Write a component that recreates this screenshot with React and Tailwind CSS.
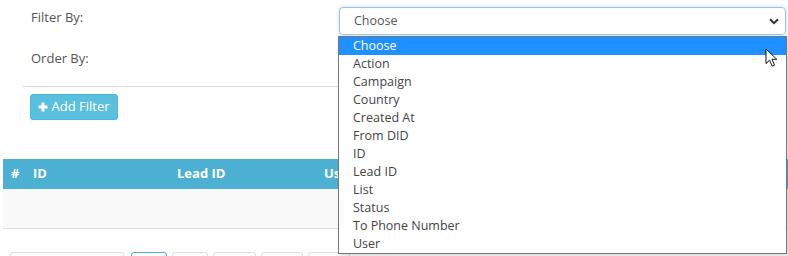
import React from 'react';

const options = [
  'Choose',
  'Action',
  'Campaign',
  'Country',
  'Created At',
  'From DID',
  'ID',
  'Lead ID',
  'List',
  'Status',
  'To Phone Number',
  'User',
];

const columns = [
  { label: '#', width: 'w-[22px]' },
  { label: 'ID', width: 'w-[144px]' },
  { label: 'Lead ID', width: 'w-[147px]' },
  { label: 'User', width: 'w-[150px]' },
  { label: 'Campaign', width: 'w-[150px]' },
  { label: 'Status', width: 'flex-1' },
];

const Chevron = () => (
  <svg width="10" height="7" viewBox="0 0 10 7" className="text-[#333]">
    <path d="M1 1.2 L5 5.2 L9 1.2" fill="none" stroke="currentColor" strokeWidth="2" />
  </svg>
);

const Cursor = () => (
  <svg width="14" height="20" viewBox="0 0 14 20" className="absolute left-[765px] top-[48px]">
    <path
      d="M1 1 L1 15.5 L4.6 12.2 L7.2 18.2 L9.6 17.2 L7 11.3 L11.8 11.3 Z"
      fill="#fff"
      stroke="#111"
      strokeWidth="1"
      strokeLinejoin="round"
    />
  </svg>
);

export default function App() {
  return (
    <div className="relative w-[788px] h-[256px] overflow-hidden bg-white font-['Open_Sans',sans-serif] text-[13px] text-[#555]">
      {/* filter form */}
      <div className="pt-[7px] pl-[22px]">
        <div className="flex items-start h-[37px]">
          <label className="w-[317px] pl-[9px] pt-[1px] leading-[18px]">Filter By:</label>
          <div className="w-[447px] h-[28px] border border-[#9ec3e6] rounded-[4px] flex items-center justify-between pl-[14px] pr-[6px] shadow-[0_0_3px_rgba(102,175,233,0.5)]">
            <span className="text-[12.5px] text-[#555]">Choose</span>
            <Chevron />
          </div>
        </div>
        <div className="flex items-start h-[42px]">
          <label className="w-[317px] pl-[9px] pt-[5px] leading-[18px]">Order By:</label>
          <div className="w-[447px] h-[28px] border border-[#ccc] rounded-[4px]" />
        </div>
        <div className="border-t border-[#ddd] mr-[3px]" />
        <div className="pt-[7px] pl-[8px]">
          <button className="flex items-center gap-[3px] w-[88px] h-[26px] justify-center rounded-[3px] bg-[#5bc0de] border border-[#46b8da] text-white text-[13px]">
            <svg width="10" height="10" viewBox="0 0 10 10">
              <path d="M5 0.5 V9.5 M0.5 5 H9.5" stroke="#fff" strokeWidth="3" />
            </svg>
            Add Filter
          </button>
        </div>
      </div>

      {/* table */}
      <div className="mt-[39px] ml-[3px]">
        <div className="flex items-center h-[30px] bg-[#4bb0d1] text-white font-bold text-[13px]">
          {columns.map((c) => (
            <div key={c.label} className={`${c.width} pl-[8px] whitespace-nowrap`}>
              {c.label}
            </div>
          ))}
        </div>
        <div className="h-[40px] bg-[#f9f9f9] border-b border-[#ddd]" />
      </div>

      {/* pagination */}
      <div className="flex gap-[5px] pl-[10px] pt-[23px]">
        <div className="w-[114px] h-[30px] border border-[#ddd] rounded-[3px]" />
        <div className="w-[36px] h-[30px] border border-[#4bb0d1] rounded-[3px] ml-[2px]" />
        <div className="w-[36px] h-[30px] border border-[#ddd] rounded-[3px]" />
        <div className="w-[43px] h-[30px] border border-[#ddd] rounded-[3px]" />
        <div className="w-[42px] h-[30px] border border-[#ddd] rounded-[3px]" />
        <div className="w-[42px] h-[30px] border border-[#ddd] rounded-[3px]" />
      </div>

      {/* open select list */}
      <ul className="absolute left-[338px] top-[36px] w-[449px] border border-[#767676] bg-white text-[12.5px] text-[#444] shadow-[2px_2px_3px_rgba(0,0,0,0.15)]">
        {options.map((o, i) => (
          <li
            key={o}
            className={
              i === 0
                ? 'h-[18px] leading-[18px] pl-[14px] bg-[#1e90ff] text-white'
                : 'h-[18px] leading-[18px] pl-[14px]'
            }
          >
            {o}
          </li>
        ))}
      </ul>
      <Cursor />
    </div>
  );
}
